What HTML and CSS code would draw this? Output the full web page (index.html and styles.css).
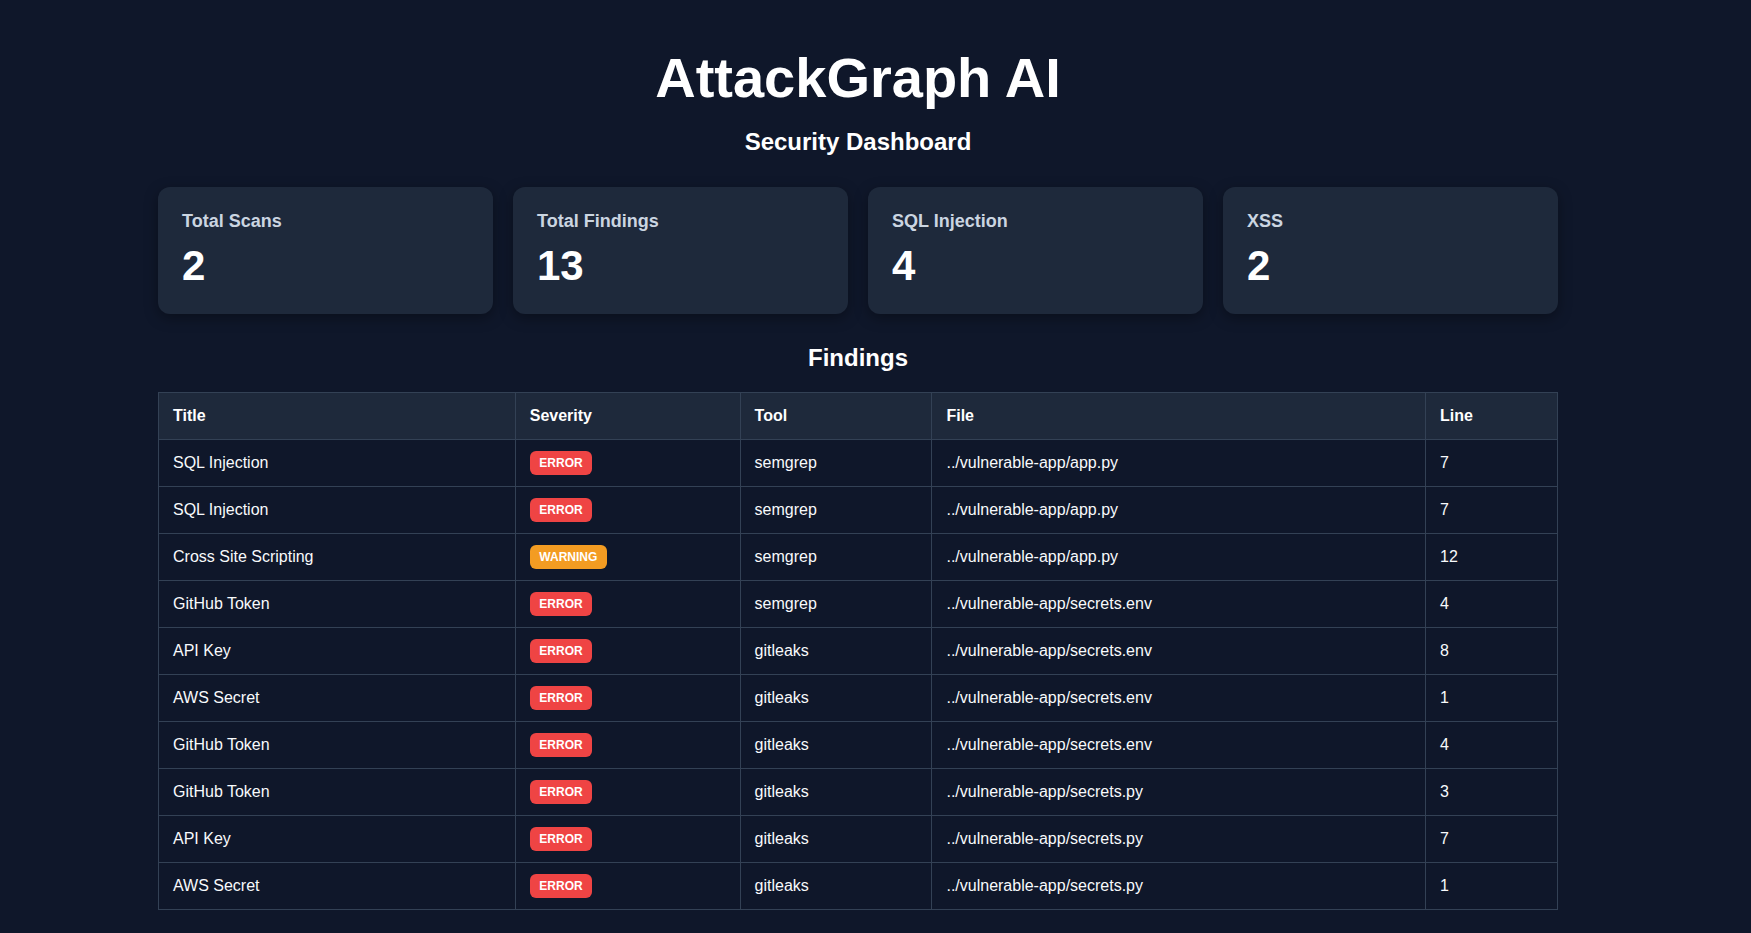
FILE: index.html
```html
<!DOCTYPE html>
<html lang="en">
<head>
  <meta charset="UTF-8">
  <meta name="viewport" content="width=device-width, initial-scale=1.0">
  <title>AttackGraph AI</title>
  <link rel="stylesheet" href="styles.css">
</head>
<body>
  <div class="dashboard">
    <h1 class="title">AttackGraph AI</h1>
    <h2 class="subtitle">Security Dashboard</h2>

    <div class="stats">
      <div class="stat-card">
        <h3 class="stat-label">Total Scans</h3>
        <p class="stat-value">2</p>
      </div>
      <div class="stat-card">
        <h3 class="stat-label">Total Findings</h3>
        <p class="stat-value">13</p>
      </div>
      <div class="stat-card">
        <h3 class="stat-label">SQL Injection</h3>
        <p class="stat-value">4</p>
      </div>
      <div class="stat-card">
        <h3 class="stat-label">XSS</h3>
        <p class="stat-value">2</p>
      </div>
    </div>

    <h2 class="section-title">Findings</h2>
    <table class="findings">
      <colgroup>
        <col class="col-title">
        <col class="col-severity">
        <col class="col-tool">
        <col class="col-file">
        <col class="col-line">
      </colgroup>
      <thead>
        <tr>
          <th>Title</th>
          <th>Severity</th>
          <th>Tool</th>
          <th>File</th>
          <th>Line</th>
        </tr>
      </thead>
      <tbody>
        <tr>
          <td>SQL Injection</td>
          <td><span class="badge badge-error">ERROR</span></td>
          <td>semgrep</td>
          <td>../vulnerable-app/app.py</td>
          <td>7</td>
        </tr>
        <tr>
          <td>SQL Injection</td>
          <td><span class="badge badge-error">ERROR</span></td>
          <td>semgrep</td>
          <td>../vulnerable-app/app.py</td>
          <td>7</td>
        </tr>
        <tr>
          <td>Cross Site Scripting</td>
          <td><span class="badge badge-warning">WARNING</span></td>
          <td>semgrep</td>
          <td>../vulnerable-app/app.py</td>
          <td>12</td>
        </tr>
        <tr>
          <td>GitHub Token</td>
          <td><span class="badge badge-error">ERROR</span></td>
          <td>semgrep</td>
          <td>../vulnerable-app/secrets.env</td>
          <td>4</td>
        </tr>
        <tr>
          <td>API Key</td>
          <td><span class="badge badge-error">ERROR</span></td>
          <td>gitleaks</td>
          <td>../vulnerable-app/secrets.env</td>
          <td>8</td>
        </tr>
        <tr>
          <td>AWS Secret</td>
          <td><span class="badge badge-error">ERROR</span></td>
          <td>gitleaks</td>
          <td>../vulnerable-app/secrets.env</td>
          <td>1</td>
        </tr>
        <tr>
          <td>GitHub Token</td>
          <td><span class="badge badge-error">ERROR</span></td>
          <td>gitleaks</td>
          <td>../vulnerable-app/secrets.env</td>
          <td>4</td>
        </tr>
        <tr>
          <td>GitHub Token</td>
          <td><span class="badge badge-error">ERROR</span></td>
          <td>gitleaks</td>
          <td>../vulnerable-app/secrets.py</td>
          <td>3</td>
        </tr>
        <tr>
          <td>API Key</td>
          <td><span class="badge badge-error">ERROR</span></td>
          <td>gitleaks</td>
          <td>../vulnerable-app/secrets.py</td>
          <td>7</td>
        </tr>
        <tr>
          <td>AWS Secret</td>
          <td><span class="badge badge-error">ERROR</span></td>
          <td>gitleaks</td>
          <td>../vulnerable-app/secrets.py</td>
          <td>1</td>
        </tr>
      </tbody>
    </table>
  </div>
</body>
</html>
```

FILE: styles.css
```css
body {
  margin: 0;
  padding: 0 35px 20px 0;
  background-color: #0f172a;
  color: #ffffff;
  font-family: "Liberation Sans", Arial, sans-serif;
}
.dashboard {
  max-width: 1400px;
  margin: 0 auto;
  padding-top: 45px;
}
.title {
  margin: 0;
  font-size: 56px;
  text-align: center;
}
.subtitle {
  margin: 18px 0 0;
  font-size: 24px;
  text-align: center;
}
.stats {
  display: grid;
  grid-template-columns: repeat(4, 1fr);
  gap: 20px;
  margin: 31px 0 30px;
}
.stat-card {
  background-color: #1e293b;
  border-radius: 12px;
  padding: 24px;
  box-shadow: 0 4px 14px rgba(0, 0, 0, 0.35);
}
.stat-label {
  margin: 0 0 10px;
  font-size: 18px;
  color: #cbd5e1;
}
.stat-value {
  margin: 0;
  font-size: 42px;
  font-weight: bold;
}
.section-title {
  margin: 0 0 20px;
  font-size: 24px;
  text-align: center;
}
.findings {
  width: 100%;
  border-collapse: collapse;
  font-size: 16px;
}
.col-title { width: 357px; }
.col-severity { width: 225px; }
.col-tool { width: 192px; }
.col-file { width: 494px; }
.col-line { width: 132px; }
.findings th,
.findings td {
  height: 46px;
  padding: 0 14px;
  border: 1px solid #334155;
  text-align: left;
  vertical-align: middle;
}
.findings th {
  background-color: #1e293b;
  font-weight: bold;
}
.findings td {
  color: #f8fafc;
}
.badge {
  display: inline-block;
  padding: 4.8px 9.6px;
  border-radius: 6px;
  font-size: 12px;
  font-weight: bold;
  color: #ffffff;
}
.badge-error {
  background-color: #ef4444;
}
.badge-warning {
  background-color: #f39c22;
}
```
